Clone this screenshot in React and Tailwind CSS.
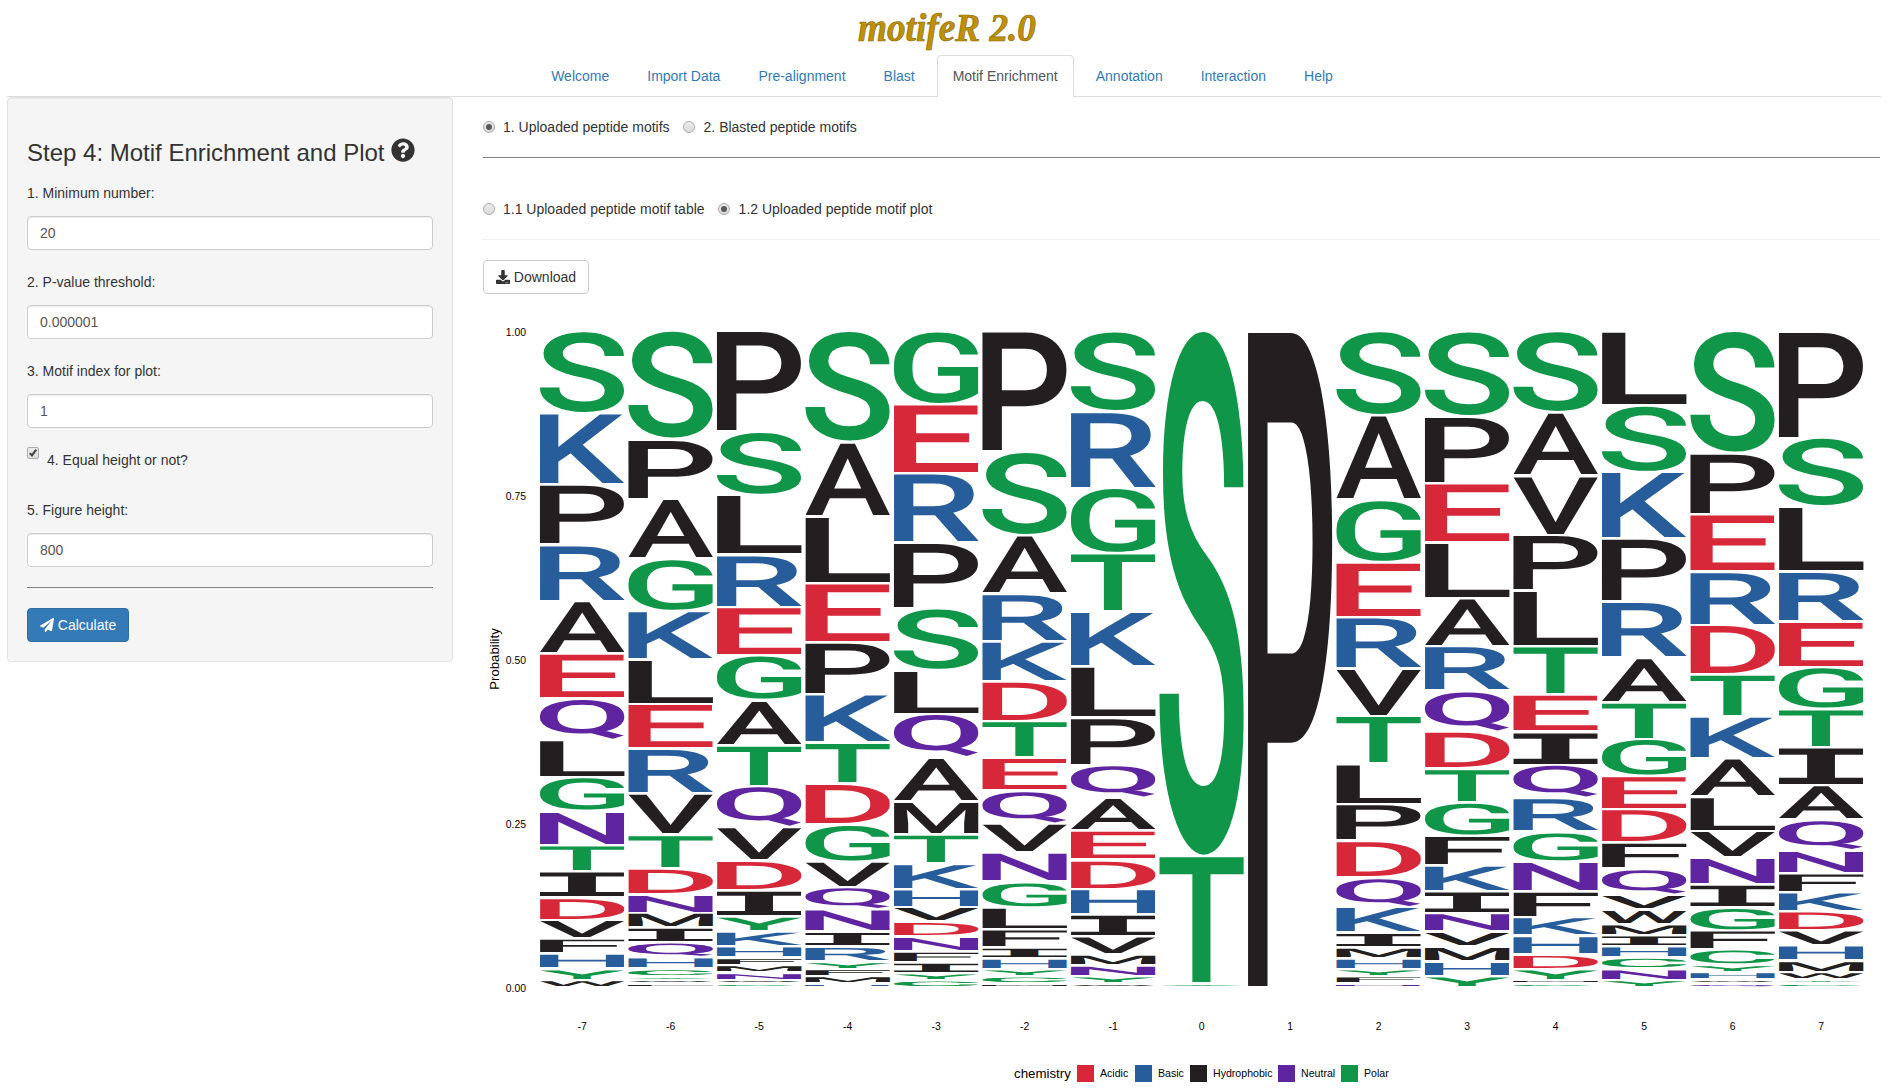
import React, { useMemo } from "react";
import { FaQuestionCircle, FaDownload, FaPaperPlane } from "react-icons/fa";

const tabs = ["Welcome", "Import Data", "Pre-alignment", "Blast", "Motif Enrichment", "Annotation", "Interaction", "Help"];

const palette = {
  Acidic: "#d72839",
  Basic: "#275d9b",
  Hydrophobic: "#231f20",
  Neutral: "#5f249f",
  Polar: "#109648",
};

const residues = {
  Acidic: "DE",
  Basic: "KRH",
  Hydrophobic: "AVLIPWFM",
  Neutral: "NQ",
  Polar: "GSTYC",
};

const colorOf = (letter) => palette[Object.keys(residues).find((k) => residues[k].includes(letter))];

// Each position lists residues from the top of the stack with their counts.
const positions = [
  [-7, "S22 K19 P16 R15 A14 E12 Q11 L10 G9 N9 T7 I7 D6 V5 F4 H4 Y3 W2"],
  [-6, "S29 P16 A16 G14 K13 L12 E12 R12 V11 T9 D7 N5 M4 I4 Q4 H3 C2 Y1 W1 F1"],
  [-5, "P27 S17 L16 R14 E13 G12 A12 T11 Q11 V9 D8 I7 Y4 K4 H3 F2 M2 N2 W1 C1"],
  [-4, "S30 A20 L18 E16 P14 K13 T11 D11 G10 V7 Q6 N6 I4 R4 Y2 F2 M2 H1"],
  [-3, "G20 E19 R19 P18 S17 L12 Q12 A12 M9 T8 K7 H5 V4 D4 N4 F3 I3 Y2 C2"],
  [-2, "P33 S23 A16 R13 K11 D11 T10 E9 Q9 V8 N8 G7 L6 F5 I3 H3 Y2 C2 M1"],
  [-1, "S22 R21 G18 T16 K15 L14 P13 Q9 A9 E8 D8 H7 I6 V5 M3 N3 Y2 W1"],
  [0, "S144 T35 Y1"],
  [1, "P180"],
  [2, "S23 A23 G17 E15 R14 V13 T13 L11 P10 D10 Q8 K7 I4 M3 H3 Y2 F2 N1"],
  [3, "S23 P18 E16 L15 A13 R12 Q11 D10 T9 G9 F8 K7 I6 N5 V4 M4 H4 Y3"],
  [4, "S22 A17 V16 P15 L15 T13 E10 I9 Q9 R9 G8 N8 F7 K5 H5 D4 Y3 M1 C1"],
  [5, "L20 S18 K18 P17 R15 A12 T10 G10 E9 D9 F7 Q7 V4 W4 M3 I3 H3 C3 N3 Y2"],
  [6, "S32 P16 E15 R14 D13 T11 K11 A10 L9 V7 N7 I6 G6 F5 C4 Y2 H2 W1 Q1"],
  [7, "P28 S18 L17 R13 E12 G11 T10 I10 A9 Q8 N6 F5 K5 D5 V4 H4 M3 W2 Y1 C1"],
];

const TOP = 332.4;
const BOTTOM = 988.8;
const GAP = 2.7;
const LEFT = 540;
const STEP = 88.5;
const WIDTH = 84.2;

const fontOf = (letter) =>
  letter === "I"
    ? { family: '"DejaVu Sans Mono", monospace', weight: 700 }
    : { family: 'Roboto, "Liberation Sans", sans-serif', weight: 500 };

// Ink boxes per pixel of font size, found by scanning a rendered glyph.
function measureLetters() {
  const size = 600;
  const pad = 60;
  const canvas = document.createElement("canvas");
  canvas.width = 700;
  canvas.height = 700;
  const ctx = canvas.getContext("2d", { willReadFrequently: true });
  const base = 520;
  const boxes = {};
  for (const letter of "ACDEFGHIKLMNPQRSTVWY") {
    const f = fontOf(letter);
    ctx.clearRect(0, 0, 700, 700);
    ctx.font = `${f.weight} ${size}px ${f.family}`;
    ctx.fillText(letter, pad, base);
    const { data } = ctx.getImageData(0, 0, 700, 700);
    let x0 = 700, x1 = 0, y0 = 700, y1 = 0;
    for (let y = 0; y < 700; y++) {
      for (let x = 0; x < 700; x++) {
        if (data[(y * 700 + x) * 4 + 3] > 127) {
          if (x < x0) x0 = x;
          if (x + 1 > x1) x1 = x + 1;
          if (y < y0) y0 = y;
          if (y + 1 > y1) y1 = y + 1;
        }
      }
    }
    boxes[letter] = {
      x: (x0 - pad) / size,
      w: (x1 - x0) / size,
      descent: (y1 - base) / size,
      h: (y1 - y0) / size,
    };
  }
  return boxes;
}

function Letter({ letter, box, x, y, height }) {
  const f = fontOf(letter);
  const size = 200;
  const sx = WIDTH / (box.w * size);
  const sy = height / (box.h * size);
  return (
    <text
      fontFamily={f.family}
      fontWeight={f.weight}
      fontSize={size}
      fill={colorOf(letter)}
      textRendering="geometricPrecision"
      transform={`matrix(${sx} 0 0 ${sy} ${x - box.x * size * sx} ${y + height - box.descent * size * sy})`}
    >
      {letter}
    </text>
  );
}

function LogoPlot() {
  const boxes = useMemo(measureLetters, []);
  const ticks = ["1.00", "0.75", "0.50", "0.25", "0.00"];
  const legend = [
    ["Acidic", 1077, 1100],
    ["Basic", 1135, 1158],
    ["Hydrophobic", 1190, 1213],
    ["Neutral", 1278, 1301],
    ["Polar", 1341, 1364],
  ];
  return (
    <svg className="block h-[789px] w-[1397px] overflow-visible" viewBox="483 300 1397 789" fontFamily='"Liberation Sans", Arial, sans-serif'>
      {ticks.map((t, i) => (
        <text key={t} x="526" y={336 + i * 164} fontSize="10.4" textAnchor="end">{t}</text>
      ))}
      <text fontSize="13.2" textAnchor="middle" transform="translate(498.5 659) rotate(-90)">Probability</text>
      {positions.map(([pos, stack], i) => {
        const items = stack.split(" ").map((s) => [s[0], Number(s.slice(1))]);
        const unit = (BOTTOM - TOP) / items.reduce((n, it) => n + it[1], 0);
        const x = LEFT + i * STEP;
        let seen = 0;
        return (
          <g key={pos}>
            {items.map(([letter, n]) => {
              const y = TOP + seen * unit;
              seen += n;
              return <Letter key={letter} letter={letter} box={boxes[letter]} x={x} y={y} height={n * unit - GAP} />;
            })}
            <text x={x + WIDTH / 2} y="1030" fontSize="10.4" textAnchor="middle">{pos}</text>
          </g>
        );
      })}
      <text x="1014" y="1077.5" fontSize="13.3">chemistry</text>
      {legend.map(([name, sx, tx]) => (
        <g key={name}>
          <rect x={sx} y="1065" width="17" height="17" fill={palette[name]} />
          <text x={tx} y="1077" fontSize="10.6">{name}</text>
        </g>
      ))}
    </svg>
  );
}

function Radio({ checked, children }) {
  return (
    <label className="flex items-center last:[&>span]:mr-[9px]">
      <span className="mr-2 flex size-3 items-center justify-center rounded-full border border-[#ababab] bg-linear-to-b from-[#ececec] to-[#dadada]">
        {checked && <i className="size-[6px] rounded-full bg-[#5a5a5a]" />}
      </span>
      {children}
    </label>
  );
}

function Field({ label, value }) {
  return (
    <div className="mb-[22px]">
      <div className="mb-[13px]">{label}</div>
      <div className="flex h-[34px] items-center rounded-[4px] border border-[#ccc] bg-white px-3 text-[#555] shadow-[inset_0_1px_1px_rgba(0,0,0,0.075)]">{value}</div>
    </div>
  );
}

export default function App() {
  return (
    <div className="h-[1089px] bg-white px-[7px] font-['Liberation_Sans',Arial,sans-serif] text-[14px] leading-5 text-[#333]">
      <header className="flex h-[55px] justify-center">
        <svg className="h-[55px] w-[200px]" viewBox="844 0 200 55">
          <text
            x="858"
            y="40.5"
            textLength="178"
            lengthAdjust="spacingAndGlyphs"
            fontFamily='"Liberation Serif", serif'
            fontSize="39"
            fontWeight="700"
            fontStyle="italic"
            fill="#bf9000"
            stroke="#8a6a10"
            strokeWidth="0.7"
          >
            motifeR 2.0
          </text>
        </svg>
      </header>
      <nav className="flex h-[42px] justify-center gap-[6px] border-b border-[#ddd] pr-1">
        {tabs.map((t) => (
          <a
            key={t}
            className={
              t === "Motif Enrichment"
                ? "h-[42px] rounded-t-[4px] border border-b-0 border-[#ddd] bg-white px-[15px] py-[10px] text-[#555]"
                : "h-[41px] border border-transparent px-[15px] py-[10px] text-[#337ab7]"
            }
          >
            {t}
          </a>
        ))}
      </nav>
      <div className="flex">
        <aside className="mr-[30px] h-[565px] w-[446px] shrink-0 rounded-[4px] border border-[#e3e3e3] bg-[#f5f5f5] px-[19px] pt-[42px] shadow-[inset_0_1px_1px_rgba(0,0,0,0.05)]">
          <h3 className="mb-[17px] flex h-[26px] items-center text-[24px] leading-[26px]">
            Step 4: Motif Enrichment and Plot
            <FaQuestionCircle className="mb-[7px] ml-[6px] size-6" />
          </h3>
          <Field label="1. Minimum number:" value="20" />
          <Field label="2. P-value threshold:" value="0.000001" />
          <Field label="3. Motif index for plot:" value="1" />
          <label className="mb-[30px] flex h-5">
            <span className="-mt-[3px] mr-2 flex size-3 items-center justify-center rounded-[2px] border border-[#ababab] bg-linear-to-b from-[#ededed] to-[#dcdcdc]">
              <svg className="size-[10px]" viewBox="0 0 11 11" fill="none" stroke="#444" strokeWidth="2.3">
                <path d="M2 5.6 4.4 8.2 9 1.8" />
              </svg>
            </span>
            4. Equal height or not?
          </label>
          <Field label="5. Figure height:" value="800" />
          <div className="-mt-[2px] mb-5 border-t border-[#808080]" />
          <button className="flex h-[34px] w-[102px] items-center justify-center rounded-[4px] border border-[#2e6da4] bg-[#337ab7] text-white">
            <FaPaperPlane className="mr-1 size-[14px]" />
            Calculate
          </button>
        </aside>
        <main className="w-[1397px] shrink-0">
          <div className="flex h-[60px] items-center gap-[13px]">
            <Radio checked>1. Uploaded peptide motifs</Radio>
            <Radio>2. Blasted peptide motifs</Radio>
          </div>
          <div className="border-t border-[#808080]" />
          <div className="mt-[41px] flex h-5 items-center gap-[13px]">
            <Radio>1.1 Uploaded peptide motif table</Radio>
            <Radio checked>1.2 Uploaded peptide motif plot</Radio>
          </div>
          <div className="mt-5 border-t border-[#eee]" />
          <button className="mt-5 mb-[6px] flex h-[34px] w-[106px] items-center justify-center rounded-[4px] border border-[#ccc] bg-white">
            <FaDownload className="mr-1 size-[14px]" />
            Download
          </button>
          <LogoPlot />
        </main>
      </div>
    </div>
  );
}
